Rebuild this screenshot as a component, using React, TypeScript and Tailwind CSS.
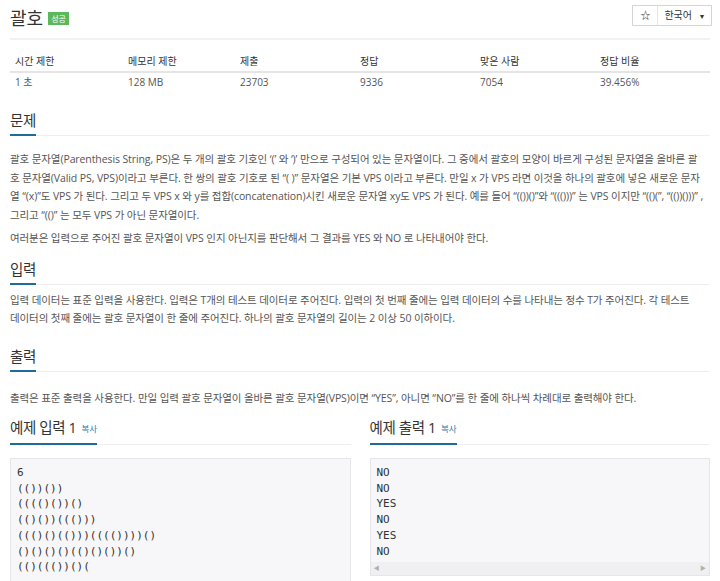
import React from "react";

const font = { fontFamily: '"Open Sans", "Noto Sans CJK KR", sans-serif' };
const mono = { fontFamily: '"DejaVu Sans Mono", "Liberation Mono", monospace' };

function SectionTitle({ children }: { children: React.ReactNode }) {
  return (
    <div className="border-b border-[#eeeeee] flex">
      <div className="border-b-2 border-[#1d6c99] -mb-px pb-[3px] text-[14.5px] leading-[20px] text-[#333] tracking-[-0.4px] whitespace-nowrap">
        {children}
      </div>
    </div>
  );
}

function Copy() {
  return <span className="text-[8.5px] text-[#2a7ab0] ml-[5px] tracking-normal relative top-[-1px]">복사</span>;
}

function Lines({ lines }: { lines: string[] }) {
  return (
    <>
      {lines.map((l, i) => (
        <span key={i} className="block whitespace-nowrap">{l}</span>
      ))}
    </>
  );
}

export default function App() {
  const stats = [
    ["시간 제한", "1 초"],
    ["메모리 제한", "128 MB"],
    ["제출", "23703"],
    ["정답", "9336"],
    ["맞은 사람", "7054"],
    ["정답 비율", "39.456%"],
  ];
  const input = ["6", "(())())", "(((()())()", "(()())((()))", "((()()(()))(((())))()", "()()()()(()()())()", "(()((())()("];
  const output = ["NO", "NO", "YES", "NO", "YES", "NO"];
  const problemLines = [
    "괄호 문자열(Parenthesis String, PS)은 두 개의 괄호 기호인 ‘(’ 와 ‘)’ 만으로 구성되어 있는 문자열이다. 그 중에서 괄호의 모양이 바르게 구성된 문자열을 올바른 괄",
    "호 문자열(Valid PS, VPS)이라고 부른다. 한 쌍의 괄호 기호로 된 “( )” 문자열은 기본 VPS 이라고 부른다. 만일 x 가 VPS 라면 이것을 하나의 괄호에 넣은 새로운 문자",
    "열 “(x)”도 VPS 가 된다. 그리고 두 VPS x 와 y를 접합(concatenation)시킨 새로운 문자열 xy도 VPS 가 된다. 예를 들어 “(())()”와 “((()))” 는 VPS 이지만 “(()(”, “(())()))” ,",
    "그리고 “(()” 는 모두 VPS 가 아닌 문자열이다.",
  ];
  const inputLines = [
    "입력 데이터는 표준 입력을 사용한다. 입력은 T개의 테스트 데이터로 주어진다. 입력의 첫 번째 줄에는 입력 데이터의 수를 나타내는 정수 T가 주어진다. 각 테스트",
    "데이터의 첫째 줄에는 괄호 문자열이 한 줄에 주어진다. 하나의 괄호 문자열의 길이는 2 이상 50 이하이다.",
  ];
  const cols = "grid grid-cols-[113px_112px_120px_120px_120px_1fr]";
  return (
    <div style={font} className="w-[720px] h-[581px] overflow-hidden bg-white text-[#555] px-[10px] pt-[6px]">
      <div className="flex justify-between items-start border-b-2 border-[#f2f2f2] pb-[8px] h-[34px]">
        <div className="flex items-center">
          <span className="text-[18px] leading-[24px] text-[#333]">괄호</span>
          <span className="ml-[5px] mt-[1px] bg-[#5cb85c] text-white text-[8px] leading-[13px] px-[3px]">성공</span>
        </div>
        <div className="flex border border-[#d5d5d5] text-[10px] text-[#333] h-[21px] mr-[-2px] mt-[-1px]">
          <div className="w-[25px] flex items-center justify-center border-r border-[#e5e5e5] text-[10px]">☆</div>
          <div className="flex items-center pl-[6px] pr-[7px] gap-[8px]">
            <span>한국어</span>
            <span className="text-[8px]">▾</span>
          </div>
        </div>
      </div>

      <div className="mt-[11px] text-[10px]">
        <div className={`${cols} border-b-2 border-[#e5e5e5] h-[22px] items-center text-[#333]`}>
          {stats.map(([h]) => (
            <div key={h} className="pl-[5px]">{h}</div>
          ))}
        </div>
        <div className={`${cols} h-[19px] items-center`}>
          {stats.map(([h, v]) => (
            <div key={h} className="pl-[5px]">{v}</div>
          ))}
        </div>
      </div>

      <div className="mt-[19px]">
        <SectionTitle>문제</SectionTitle>
        <div className="text-[10.5px] leading-[18.5px] mt-[14px] tracking-[-0.1px]">
          <p>
            <Lines lines={problemLines} />
          </p>
          <p className="mt-[5px]">
            여러분은 입력으로 주어진 괄호 문자열이 VPS 인지 아닌지를 판단해서 그 결과를 YES 와 NO 로 나타내어야 한다.
          </p>
        </div>
      </div>

      <div className="mt-[12px]">
        <SectionTitle>입력</SectionTitle>
        <p className="text-[10.5px] leading-[18.5px] mt-[6px] tracking-[-0.1px]">
          <Lines lines={inputLines} />
        </p>
      </div>

      <div className="mt-[19px]">
        <SectionTitle>출력</SectionTitle>
        <p className="text-[10.5px] leading-[18.5px] mt-[17px] tracking-[-0.1px]">
          출력은 표준 출력을 사용한다. 만일 입력 괄호 문자열이 올바른 괄호 문자열(VPS)이면 “YES”, 아니면 “NO”를 한 줄에 하나씩 차례대로 출력해야 한다.
        </p>
      </div>

      <div className="grid grid-cols-2 gap-[19px] mt-[11px]">
        <div>
          <SectionTitle>
            예제 입력 1<Copy />
          </SectionTitle>
          <pre
            className="mt-[13px] bg-[#f7f7f9] border border-[#e6e6ea] px-[6px] pt-[6px] text-[11px] leading-[15.7px] text-[#333] h-[140px]"
            style={mono}
          >
            {input.join("\n")}
          </pre>
        </div>
        <div>
          <SectionTitle>
            예제 출력 1<Copy />
          </SectionTitle>
          <div className="mt-[13px] bg-[#f7f7f9] border border-[#e6e6ea] text-[11px] leading-[15.7px] text-[#333] h-[118px] flex flex-col">
            <pre className="px-[6px] pt-[6px] flex-1" style={mono}>
              {output.join("\n")}
            </pre>
            <div className="h-[13px] bg-[#f0f0f2] flex justify-between items-center px-[3px] text-[6px] text-[#b0b0b0]">
              <span>◀</span>
              <span>▶</span>
            </div>
          </div>
        </div>
      </div>
    </div>
  );
}
